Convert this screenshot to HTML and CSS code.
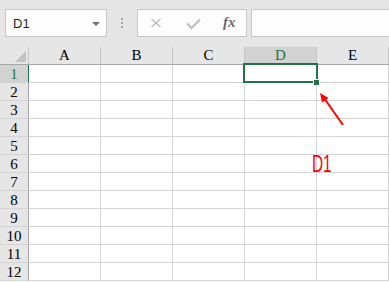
FILE: index.html
```html
<!DOCTYPE html>
<html lang="zh">
<head>
    <meta charset="UTF-8">
    <title>表格</title>
    <link rel="stylesheet" href="styles.css">
</head>
<body>
    <!-- 编辑栏 -->
    <div class="toolbar">
        <div class="name-box">
            <span class="name-text">D1</span>
            <span class="name-arrow"></span>
        </div>
        <div class="grip"><i></i><i></i><i></i></div>
        <div class="fx-box">
            <svg class="ic-x" width="12" height="10" viewBox="0 0 12 10">
                <path d="M1.5 1 L10.5 9 M10.5 1 L1.5 9" stroke="#bcbcbc" stroke-width="1.4" fill="none"/>
            </svg>
            <svg class="ic-ok" width="15" height="11" viewBox="0 0 15 11">
                <path d="M1 5.5 L5.5 10 L14 1.5" stroke="#bcbcbc" stroke-width="2" fill="none"/>
            </svg>
            <span class="fx">fx</span>
        </div>
        <div class="formula"></div>
    </div>

    <!-- 工作表 -->
    <div class="sheet">
        <div class="corner"><span class="tri"></span></div>
        <div class="col-head">A</div>
        <div class="col-head">B</div>
        <div class="col-head">C</div>
        <div class="col-head active">D</div>
        <div class="col-head">E</div>
    </div>
    <div class="sheet" id="rows"></div>

    <!-- 选中单元格 -->
    <div class="selection"></div>
    <div class="handle"></div>

    <!-- 标注 -->
    <svg class="arrow" width="389" height="282" viewBox="0 0 389 282">
        <line x1="343" y1="125" x2="324" y2="98" stroke="#ff0000" stroke-width="2"/>
        <polygon points="320,93 328.5,98 322,102.6" fill="#ff0000"/>
    </svg>
    <div class="label">D1</div>

    <script>
        var rows = document.getElementById('rows');
        var html = '';
        for (var r = 1; r <= 12; r++) {
            html += '<div class="row-head' + (r === 1 ? ' active' : '') + '">' + r + '</div>';
            for (var c = 0; c < 5; c++) {
                html += '<div class="cell"></div>';
            }
        }
        rows.innerHTML = html;
    </script>
</body>
</html>
```

FILE: styles.css
```css
body { margin: 0; background: #ffffff; font-family: "Liberation Sans", Arial, sans-serif; width: 389px; height: 282px; overflow: hidden; position: relative; }

.toolbar { height: 47px; background: #e6e6e6; display: flex; align-items: flex-start; padding-top: 9px; box-sizing: border-box; }
.name-box { margin-left: 5px; width: 102px; height: 28px; box-sizing: border-box; border: 1px solid #c6c6c6; background: #fdfdfd; display: flex; align-items: center; justify-content: space-between; padding: 0 6px 0 7px; }
.name-text { font-size: 13px; color: #262626; }
.name-arrow { width: 0; height: 0; border-left: 4px solid transparent; border-right: 4px solid transparent; border-top: 4px solid #707070; margin-top: 1px; }
.grip { margin-left: 14px; width: 2px; padding-top: 9px; display: flex; flex-direction: column; gap: 2px; }
.grip i { display: block; width: 2px; height: 2px; background: #a6a6a6; }
.fx-box { margin-left: 14px; width: 110px; height: 28px; box-sizing: border-box; border: 1px solid #c6c6c6; background: #fdfdfd; display: flex; align-items: center; padding-left: 12px; }
.ic-ok { margin-left: 24px; }
.fx { margin-left: 22px; font-family: "Liberation Serif", serif; font-style: italic; font-weight: bold; font-size: 15px; color: #6a6a6a; margin-top: -2px; }
.formula { margin-left: 4px; flex: 1; height: 28px; box-sizing: border-box; border: 1px solid #c6c6c6; border-right: none; background: #fdfdfd; }

.sheet { display: grid; grid-template-columns: 29px 72px 72px 72px 72px 1fr; grid-auto-rows: 18px; font-family: "Liberation Serif", "Times New Roman", serif; font-size: 15px; }
.corner, .col-head { background: #e6e6e6; border-right: 1px solid #c4c4c4; border-bottom: 1px solid #a6a6a6; box-sizing: border-box; text-align: center; line-height: 17px; color: #000; }
.corner { position: relative; }
.tri { position: absolute; right: 2px; bottom: 2px; width: 0; height: 0; border-left: 11px solid transparent; border-bottom: 11px solid #c3c3c3; }
.col-head.active { background: #d2d2d2; color: #217346; }
.row-head { background: #e6e6e6; border-right: 1px solid #a6a6a6; border-bottom: 1px solid #d4d4d4; box-sizing: border-box; text-align: center; line-height: 18px; color: #000; }
.row-head.active { background: #d2d2d2; color: #217346; border-right-color: #217346; }
.cell { border-right: 1px solid #d4d4d4; border-bottom: 1px solid #d4d4d4; box-sizing: border-box; }

.selection { position: absolute; left: 243px; top: 63px; width: 75px; height: 20px; box-sizing: border-box; border: 2px solid #217346; }
.handle { position: absolute; left: 313px; top: 79px; width: 7px; height: 7px; box-sizing: border-box; border: 1px solid #ffffff; background: #217346; }
.arrow { position: absolute; left: 0; top: 0; }
.label { position: absolute; left: 312px; top: 152px; font-size: 24px; line-height: 24px; color: #ff0000; transform: scaleX(0.64); transform-origin: left top; }
```
